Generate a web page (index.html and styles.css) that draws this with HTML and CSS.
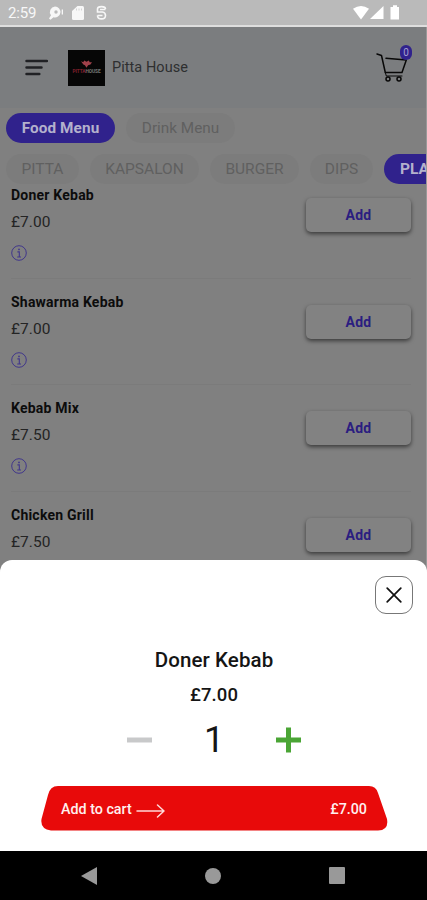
FILE: index.html
```html
<!DOCTYPE html>
<html lang="en">
<head>
<meta charset="utf-8">
<title>Pitta House</title>
<link rel="stylesheet" href="styles.css">
</head>
<body>
<svg width="0" height="0" class="defs">
  <symbol id="info" viewBox="0 0 16 16">
    <circle cx="8" cy="8" r="7.3" fill="none" stroke="currentColor" stroke-width="1"/>
    <circle cx="8" cy="4.4" r=".9" fill="currentColor"/>
    <path d="M6.4 6.9h1.9v5M6.2 12h3.8" fill="none" stroke="currentColor" stroke-width="1.1"/>
  </symbol>
</svg>
<div class="screen">
  <div class="status">
    <span class="clock">2:59</span>
    <svg class="status-left" width="62" height="18" viewBox="0 0 62 18" fill="#f7f7f7">
      <path d="M7 2.500a5.500 5.500 0 1 1-1.500 10.800L2.500 15.800 1 14.500 3 11.300A5.500 5.500 0 0 1 7 2.500z"/>
      <circle cx="8" cy="8" r="1.700" fill="#bababa"/><rect x="13.700" y="5.500" width="1.300" height="5"/>
      <path d="M29.500 2h5a1.500 1.500 0 0 1 1.500 1.500v11a1.500 1.500 0 0 1-1.500 1.500h-9a1.500 1.500 0 0 1-1.500-1.500V7z"/>
      <path d="M28.500 4.500v2M31 4.500v2M33.500 4.500v2" stroke="#cfcfcf" stroke-width=".9"/>
      <path d="M57.500 5C57.500 1.800 49.500 1.800 49.500 5V8H54.500Q57.500 8.500 57.500 11.500C57.500 16 49.500 16 49.500 11.500M52 5.500h5.500M49.500 11.500h5" fill="none" stroke="#f7f7f7" stroke-width="1.600"/>
    </svg>
    <svg class="status-right" width="48" height="16" viewBox="0 0 48 16" fill="#fff">
      <path d="M0 3.800Q8 -1.800 16 3.800L8 14.500z"/>
      <path d="M30.500 1v13H17z"/>
      <path d="M40 .3h4V2h2v12.500h-8.500V2H40z"/>
    </svg>
  </div>
  <header class="header">
    <svg class="burger" width="24" height="18" viewBox="0 0 24 18" fill="none" stroke="#202124" stroke-width="2.500" stroke-linecap="round">
      <path d="M2.500 2H23M2.500 8.500H17.500M2.500 15H15.300"/>
    </svg>
    <div class="logo">
      <svg width="11" height="9" viewBox="0 0 14 10"><path d="M0 1l3 1 1-2 3 1.500L10 0l1 2 3 0-2 3-3 1-2 3-2-3-2-1z" fill="#a0414b"/></svg>
      <div class="logo-name"><b>PITTA</b>HOUSE</div>
    </div>
    <span class="brand">Pitta House</span>
    <div class="cart">
      <svg width="32" height="32" viewBox="0 0 32 32" fill="none" stroke="#080808" stroke-width="1.500" stroke-linecap="round" stroke-linejoin="round">
        <path d="M1 2l4.500 1.500L9.300 20.500H26L30.300 8L10 6.300" />
        <path d="M9.300 20.500l1 3.500H26" stroke-width="1"/>
        <circle cx="12" cy="27" r="2"/><circle cx="23" cy="27" r="2"/>
      </svg>
      <span class="count">0</span>
    </div>
  </header>
  <main class="menu">
    <nav class="tabs">
      <span class="pill active food">Food Menu</span>
      <span class="pill drink">Drink Menu</span>
    </nav>
    <nav class="tabs categories">
      <span class="pill pitta">PITTA</span>
      <span class="pill kapsalon">KAPSALON</span>
      <span class="pill burgers">BURGER</span>
      <span class="pill dips">DIPS</span>
      <span class="pill active platter">PLA</span>
    </nav>
    <section class="items">
      <article class="item"><div><h2>Doner Kebab</h2><p>£7.00</p><svg class="info"><use href="#info"/></svg></div><button>Add</button></article>
      <article class="item"><div><h2>Shawarma Kebab</h2><p>£7.00</p><svg class="info"><use href="#info"/></svg></div><button>Add</button></article>
      <article class="item"><div><h2>Kebab Mix</h2><p>£7.50</p><svg class="info"><use href="#info"/></svg></div><button>Add</button></article>
      <article class="item"><div><h2>Chicken Grill</h2><p>£7.50</p></div><button>Add</button></article>
    </section>
  </main>
  <section class="sheet">
    <div class="close">
      <svg width="16" height="16" viewBox="0 0 16 16" stroke="#111" stroke-width="1.700" stroke-linecap="round"><path d="M1.200 1.200l13.600 13.600M14.800 1.200L1.200 14.800"/></svg>
    </div>
    <h1>Doner Kebab</h1>
    <p class="price">£7.00</p>
    <div class="quantity">
      <svg width="26" height="26" viewBox="0 0 26 26"><path d="M0 10.500h25v5h-25z" fill="#c8c9ca"/></svg>
      <span>1</span>
      <svg width="26" height="26" viewBox="0 0 26 26"><path d="M11 .5h5v10h10v5h-10v10h-5v-10h-10v-5h10z" fill="#4aa535"/></svg>
    </div>
    <div class="checkout">
      <svg class="shape" width="347" height="45" viewBox="0 0 347 45"><path d="M17 0H328Q335 0 337 7L346 33Q348 44 337 44.500H10Q-1 43 .500 33L7 9Q9 0 17 0z" fill="#e80a0a"/></svg>
      <span class="label">Add to cart</span>
      <svg class="arrow" width="29" height="14" viewBox="0 0 29 14" fill="none" stroke="#ffd8d8" stroke-width="1.500" stroke-linecap="round" stroke-linejoin="round"><path d="M1 7H28M21.500 1L28 7l-6.500 6"/></svg>
      <span class="total">£7.00</span>
    </div>
  </section>
  <footer class="navbar">
    <svg width="16" height="18" viewBox="0 0 16 18"><path d="M0 9L16 0V18z" fill="#999"/></svg>
    <svg width="16" height="16" viewBox="0 0 16 16"><circle cx="8" cy="8" r="8" fill="#999"/></svg>
    <svg width="16" height="17" viewBox="0 0 16 17"><rect width="16" height="17" rx="1" fill="#999"/></svg>
  </footer>
</div>
</body>
</html>
```
FILE: styles.css
```css
* { box-sizing: border-box; }
body { margin: 0; font-family: Roboto, sans-serif; }
h1, h2, p { margin: 0; }
.defs { position: absolute; }
.screen { position: relative; width: 427px; height: 900px; overflow: hidden; display: flex; flex-direction: column; background: #808080; }
.status { flex: none; height: 27px; background: #bababa; border-bottom: 2px solid #dedede; display: flex; align-items: center; padding: 1px 26px 0 8px; color: #f7f7f7; }
.clock { font-size: 15px; width: 40px; letter-spacing: -0.2px; }
.status-right { margin-left: auto; }
.header { flex: none; height: 81px; background: #7b7d7f; border-right: 1px solid #999; display: flex; align-items: center; padding: 0 14px 0 24px; }
.logo { width: 37px; height: 36px; margin-left: 20px; background: #060606; display: flex; flex-direction: column; align-items: center; justify-content: center; }
.logo-name { font-size: 4.800px; line-height: 6px; font-weight: 700; color: #777; letter-spacing: -0.1px; }
.logo-name b { color: #751e29; }
.brand { margin-left: 7px; font-size: 14.500px; color: #2e2f30; letter-spacing: 0.05px; }
.cart { position: relative; margin-left: auto; width: 36px; height: 32px; }
.cart svg { display: block; }
.count { position: absolute; left: 24px; top: -7px; width: 12px; height: 15px; border-radius: 6px; background: #30228c; color: #a59fd0; font-size: 10px; line-height: 15px; text-align: center; }
.menu { flex: 1; min-height: 0; overflow: hidden; border-right: 1px solid #999; padding-top: 5px; }
.tabs { display: flex; gap: 11px; padding-left: 6px; height: 30px; }
.categories { margin-top: 11px; }
.pill { flex: none; height: 30px; line-height: 30px; border-radius: 15px; text-align: center; background: #7c7c7c; color: #606060; font-size: 15.500px; }
.active { background: #30228c; color: #b4b1cc; font-weight: 700; }
.food, .drink { width: 109px; }
.food { font-size: 15.300px; letter-spacing: 0.1px; }
.drink { font-size: 15.300px; }
.pitta { width: 73px; }
.kapsalon { width: 109px; }
.burgers { width: 89px; }
.dips { width: 63px; }
.platter { width: 42px; text-align: left; padding-left: 16px; border-radius: 15px 0 0 15px; }
.items { padding: 0 15px 0 11px; }
.item { height: 106.800px; display: flex; justify-content: space-between; border-bottom: 1px solid #7b7b7b; }
.item:first-child { height: 94.500px; }
.item > div { padding-top: 14px; }
.item:first-child > div { padding-top: 2px; }
.item h2 { font-size: 14px; line-height: 18px; font-weight: 700; color: #0c0c0c; letter-spacing: 0.22px; }
.item p { margin-top: 8px; font-size: 15.500px; line-height: 20px; color: #242424; letter-spacing: 0.05px; }
.info { display: block; width: 16px; height: 16px; margin-top: 13px; color: #40368b; }
.item button { width: 105px; height: 34px; margin-top: 26px; padding: 0; border: 0; border-radius: 5px; background: #828282; box-shadow: 0 2px 4px rgba(0,0,0,.55); font: 700 14px Roboto, sans-serif; letter-spacing: 0.2px; color: #2b1d80; }
.item:first-child button { margin-top: 14px; }
.sheet { position: absolute; left: 0; right: 0; top: 560px; height: 291px; background: #fff; border-radius: 12px 12px 0 0; display: flex; flex-direction: column; align-items: center; padding-top: 16px; color: #151515; }
.close { align-self: flex-end; margin-right: 14px; width: 38px; height: 38px; border: 1px solid #777; border-radius: 11px; display: flex; align-items: center; justify-content: center; }
.sheet h1 { margin: 34px 0 0 1px; font-size: 20.500px; line-height: 24px; font-weight: 500; letter-spacing: 0.1px; }
.price { margin: 12px 0 0 1px; font-size: 18.500px; line-height: 22px; font-weight: 500; letter-spacing: 0.1px; }
.quantity { width: 175px; margin: 14px 0 0 1px; height: 40px; display: flex; align-items: center; justify-content: space-between; }
.quantity span { font-size: 36px; line-height: 40px; }
.checkout { position: relative; width: 347px; height: 45px; margin: 26px 0 0 2px; display: flex; align-items: center; padding: 0 21px 0 20px; color: #fff0f0; font-size: 14.300px; font-weight: 500; }
.shape { position: absolute; inset: 0; }
.label, .arrow, .total { position: relative; }
.arrow { margin: 4px 0 0 4px; }
.total { margin-left: auto; }
.navbar { flex: none; height: 49px; background: #000; display: flex; justify-content: space-between; align-items: center; padding: 0 82px 0 81px; }
```
